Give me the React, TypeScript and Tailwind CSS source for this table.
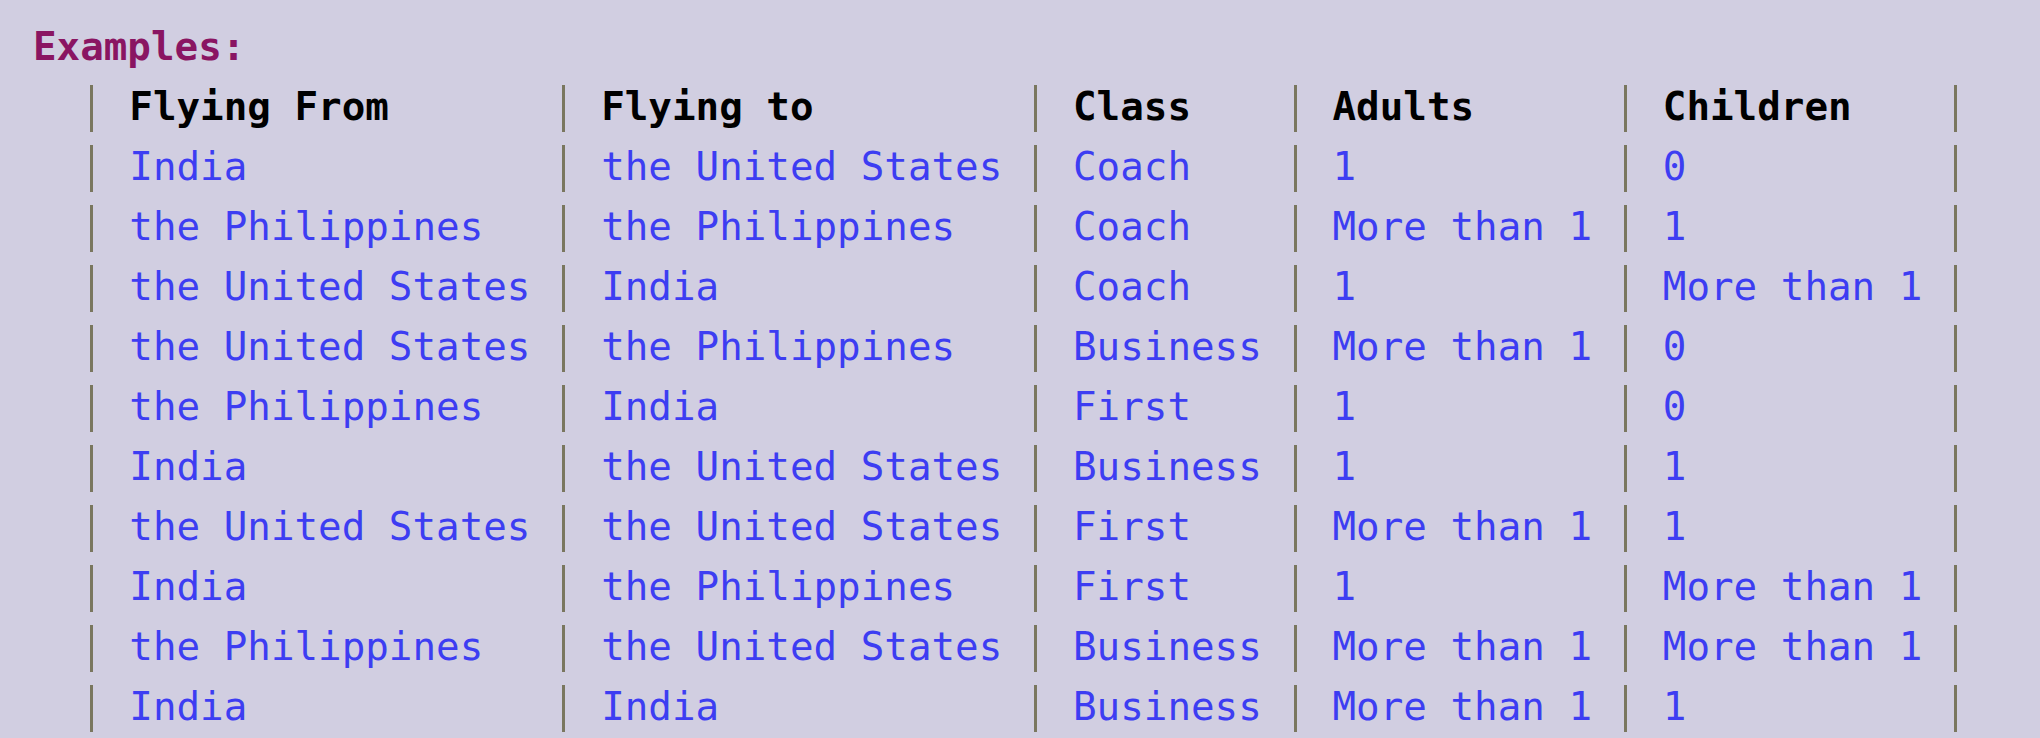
import React from 'react';

type Row = [string, string, string, string, string];

const headers: Row = ['Flying From', 'Flying to', 'Class', 'Adults', 'Children'];

const rows: Row[] = [
  ['India', 'the United States', 'Coach', '1', '0'],
  ['the Philippines', 'the Philippines', 'Coach', 'More than 1', '1'],
  ['the United States', 'India', 'Coach', '1', 'More than 1'],
  ['the United States', 'the Philippines', 'Business', 'More than 1', '0'],
  ['the Philippines', 'India', 'First', '1', '0'],
  ['India', 'the United States', 'Business', '1', '1'],
  ['the United States', 'the United States', 'First', 'More than 1', '1'],
  ['India', 'the Philippines', 'First', '1', 'More than 1'],
  ['the Philippines', 'the United States', 'Business', 'More than 1', 'More than 1'],
  ['India', 'India', 'Business', 'More than 1', '1'],
];

// column widths in characters: pipe + space + widest value + space
const widths = ['w-[20ch]', 'w-[20ch]', 'w-[11ch]', 'w-[14ch]', 'w-[14ch]'];

const Pipe = () => (
  <div className="w-[1ch] h-[60px] flex justify-center shrink-0">
    <div className="w-[3px] h-[47px] mt-[10px] bg-[#7a775f]" />
  </div>
);

const TableRow: React.FC<{ cells: Row; head?: boolean }> = ({ cells, head }) => {
  return (
    <div className="flex h-[60px] pl-[2ch]">
      {cells.map((c, i) => (
        <div key={i} className={`${widths[i]} flex shrink-0`}>
          <Pipe />
          <span
            className={
              head
                ? 'pl-[1ch] ml-[2px] pt-[3px] leading-[57px] whitespace-pre font-bold text-black'
                : 'pl-[1ch] ml-[2px] pt-[3px] leading-[57px] whitespace-pre text-[#3d3df2]'
            }
          >
            {c}
          </span>
        </div>
      ))}
      <Pipe />
    </div>
  );
};

const App: React.FC = () => {
  return (
    <main className="w-screen h-screen overflow-hidden bg-[#d1cee1] pt-[15px] pl-[33px] text-[39.2px] font-['DejaVu_Sans_Mono',monospace]">
      <div className="h-[60px] pt-[3px] leading-[57px] font-bold text-[#8a1562]">Examples:</div>
      <TableRow cells={headers} head />
      {rows.map((r, i) => (
        <TableRow key={i} cells={r} />
      ))}
    </main>
  );
};

export default App;
